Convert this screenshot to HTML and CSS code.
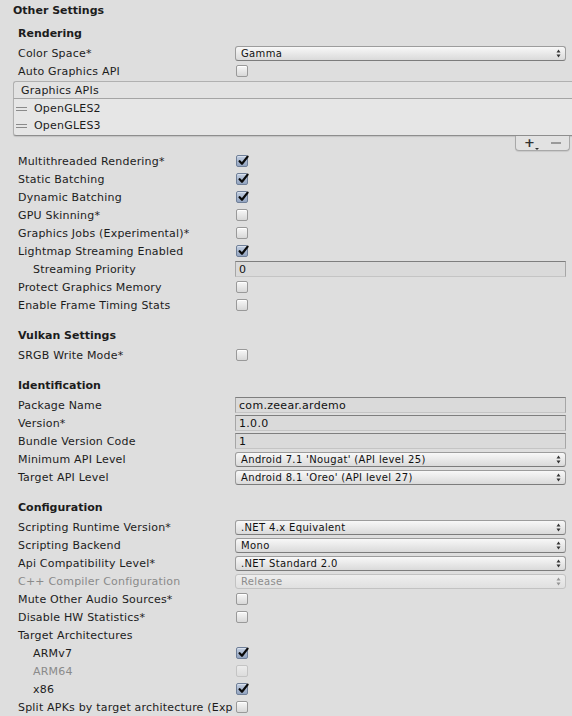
FILE: index.html
```html
<!DOCTYPE html>
<html>
<head>
<meta charset="utf-8">
<link rel="stylesheet" href="styles.css">
</head>
<body>
<svg width="0" height="0" class="defs">
  <defs>
    <symbol id="chk" viewBox="0 0 12 12">
      <path d="M2.6 6.2 L5 8.8 L10.6 1.6" fill="none" stroke="#0a0a0a" stroke-width="2.2" stroke-linecap="round" stroke-linejoin="round"/>
    </symbol>
    <symbol id="arr" viewBox="0 0 5 9">
      <path d="M2.5 0.5 L4.5 3.5 L0.5 3.5 Z M2.5 8.5 L4.5 5.5 L0.5 5.5 Z" fill="#333"/>
    </symbol>
  </defs>
</svg>
<div class="panel">
  <div class="title">Other Settings</div>

  <div class="section first">
    <div class="heading">Rendering</div>
    <div class="row"><div class="label">Color Space*</div><div class="control"><div class="popup"><span>Gamma</span><svg class="arrows"><use href="#arr"/></svg></div></div></div>
    <div class="row"><div class="label">Auto Graphics API</div><div class="control"><span class="cb"></span></div></div>
    <div class="list">
      <div class="list-head">Graphics APIs</div>
      <div class="list-body">
        <div class="list-item"><span class="handle"></span>OpenGLES2</div>
        <div class="list-item"><span class="handle"></span>OpenGLES3</div>
      </div>
      <div class="list-foot-wrap">
        <div class="list-foot">
          <span class="plus">+<span class="tri"></span></span>
          <span class="minus"></span>
        </div>
      </div>
    </div>
    <div class="row"><div class="label">Multithreaded Rendering*</div><div class="control"><span class="cb on"><svg><use href="#chk"/></svg></span></div></div>
    <div class="row"><div class="label">Static Batching</div><div class="control"><span class="cb on"><svg><use href="#chk"/></svg></span></div></div>
    <div class="row"><div class="label">Dynamic Batching</div><div class="control"><span class="cb on"><svg><use href="#chk"/></svg></span></div></div>
    <div class="row"><div class="label">GPU Skinning*</div><div class="control"><span class="cb"></span></div></div>
    <div class="row"><div class="label">Graphics Jobs (Experimental)*</div><div class="control"><span class="cb"></span></div></div>
    <div class="row"><div class="label">Lightmap Streaming Enabled</div><div class="control"><span class="cb on"><svg><use href="#chk"/></svg></span></div></div>
    <div class="row"><div class="label indent">Streaming Priority</div><div class="control"><div class="field">0</div></div></div>
    <div class="row"><div class="label">Protect Graphics Memory</div><div class="control"><span class="cb"></span></div></div>
    <div class="row"><div class="label">Enable Frame Timing Stats</div><div class="control"><span class="cb"></span></div></div>
  </div>

  <div class="section">
    <div class="heading">Vulkan Settings</div>
    <div class="row"><div class="label">SRGB Write Mode*</div><div class="control"><span class="cb"></span></div></div>
  </div>

  <div class="section">
    <div class="heading">Identification</div>
    <div class="row"><div class="label">Package Name</div><div class="control"><div class="field">com.zeear.ardemo</div></div></div>
    <div class="row"><div class="label">Version*</div><div class="control"><div class="field">1.0.0</div></div></div>
    <div class="row"><div class="label">Bundle Version Code</div><div class="control"><div class="field">1</div></div></div>
    <div class="row"><div class="label">Minimum API Level</div><div class="control"><div class="popup"><span>Android 7.1 'Nougat' (API level 25)</span><svg class="arrows"><use href="#arr"/></svg></div></div></div>
    <div class="row"><div class="label">Target API Level</div><div class="control"><div class="popup"><span>Android 8.1 'Oreo' (API level 27)</span><svg class="arrows"><use href="#arr"/></svg></div></div></div>
  </div>

  <div class="section">
    <div class="heading">Configuration</div>
    <div class="row"><div class="label">Scripting Runtime Version*</div><div class="control"><div class="popup"><span>.NET 4.x Equivalent</span><svg class="arrows"><use href="#arr"/></svg></div></div></div>
    <div class="row"><div class="label">Scripting Backend</div><div class="control"><div class="popup"><span>Mono</span><svg class="arrows"><use href="#arr"/></svg></div></div></div>
    <div class="row"><div class="label">Api Compatibility Level*</div><div class="control"><div class="popup"><span>.NET Standard 2.0</span><svg class="arrows"><use href="#arr"/></svg></div></div></div>
    <div class="row"><div class="label disabled">C++ Compiler Configuration</div><div class="control"><div class="popup disabled"><span>Release</span><svg class="arrows"><use href="#arr"/></svg></div></div></div>
    <div class="row"><div class="label">Mute Other Audio Sources*</div><div class="control"><span class="cb"></span></div></div>
    <div class="row"><div class="label">Disable HW Statistics*</div><div class="control"><span class="cb"></span></div></div>
    <div class="row"><div class="label">Target Architectures</div><div class="control"></div></div>
    <div class="row"><div class="label indent">ARMv7</div><div class="control"><span class="cb on"><svg><use href="#chk"/></svg></span></div></div>
    <div class="row"><div class="label indent disabled">ARM64</div><div class="control"><span class="cb disabled"></span></div></div>
    <div class="row"><div class="label indent">x86</div><div class="control"><span class="cb on"><svg><use href="#chk"/></svg></span></div></div>
    <div class="row"><div class="label">Split APKs by target architecture (Exp</div><div class="control"><span class="cb"></span></div></div>
  </div>
</div>
</body>
</html>
```

FILE: styles.css
```css
html, body {
  margin: 0;
  padding: 0;
  background: #dedede;
  font-family: "DejaVu Sans", Verdana, sans-serif;
  font-size: 11px;
  color: #1c1c1c;
  overflow: hidden;
}

.defs {
  position: absolute;
  width: 0;
  height: 0;
}

.panel {
  padding-top: 1px;
}

.title {
  height: 18px;
  line-height: 19px;
  padding-left: 13px;
  font-weight: bold;
  font-size: 11px;
}

.section {
  margin-top: 12px;
}

.section.first {
  margin-top: 5px;
}

.heading {
  height: 18px;
  line-height: 19px;
  padding-left: 18px;
  font-weight: bold;
  font-size: 11px;
  margin-bottom: 2px;
}

.row {
  display: flex;
  align-items: center;
  height: 18px;
}

.label {
  width: 235px;
  flex: none;
  box-sizing: border-box;
  padding-left: 18px;
  white-space: nowrap;
  overflow: hidden;
  letter-spacing: 0.2px;
}

.label.indent {
  padding-left: 33px;
}

.label.disabled {
  color: #8a8a8a;
}

.control {
  flex: 1;
  margin-right: 6px;
  display: flex;
  align-items: center;
  height: 18px;
}

/* checkbox */
.cb {
  position: relative;
  width: 12px;
  height: 12px;
  margin-left: 1px;
  box-sizing: border-box;
  border: 1px solid #999;
  border-radius: 2px;
  background: linear-gradient(#f7f7f7, #d8d8d8);
  box-shadow: inset 0 1px 0 #fff;
}

.cb.on {
  border-color: #6f7f98;
  background: linear-gradient(#c2cee0, #93a4c0);
  box-shadow: inset 0 1px 0 #d8e0ec;
}

.cb.disabled {
  border-color: #c4c4c4;
  background: linear-gradient(#ececec, #dcdcdc);
  box-shadow: none;
}

.cb svg {
  position: absolute;
  left: 0;
  top: -1px;
  width: 12px;
  height: 12px;
  overflow: visible;
}

/* popup */
.popup {
  flex: 1;
  height: 15px;
  box-sizing: border-box;
  border: 1px solid #9c9c9c;
  border-bottom-color: #7c7c7c;
  border-radius: 3px;
  background: linear-gradient(#f8f8f8, #dadada);
  display: flex;
  align-items: center;
  justify-content: space-between;
  padding: 0 4px 0 5px;
  font-size: 10px;
  letter-spacing: 0.35px;
  color: #111;
}

.popup.disabled {
  border-color: #c2c2c2;
  background: linear-gradient(#eeeeee, #e0e0e0);
  color: #8c8c8c;
}

.popup.disabled .arrows {
  opacity: 0.45;
}

.arrows {
  width: 5px;
  height: 9px;
}

/* text field */
.field {
  flex: 1;
  height: 16px;
  box-sizing: border-box;
  border: 1px solid #a6a6a6;
  border-top-color: #7e7e7e;
  border-bottom-color: #c4c4c4;
  background: #dadada;
  padding-left: 3px;
  line-height: 15px;
  letter-spacing: 0.3px;
  color: #111;
}

/* reorderable list */
.list {
  margin: 1px 0 1px 13px;
}

.list-head {
  height: 18px;
  box-sizing: border-box;
  border: 1px solid #b0b0b0;
  border-right: none;
  border-bottom-color: #a4a4a4;
  border-radius: 3px 0 0 0;
  background: #e2e2e2;
  line-height: 17px;
  padding-left: 7px;
  letter-spacing: 0.2px;
}

.list-body {
  box-sizing: border-box;
  height: 37px;
  padding-top: 1px;
  border-left: 1px solid #b0b0b0;
  border-bottom: 1px solid #8e8e8e;
  border-radius: 0 0 0 3px;
  background: #e6e6e6;
  box-shadow: 0 1px 1px rgba(0, 0, 0, 0.12);
  letter-spacing: 0.2px;
}

.list-item {
  height: 17px;
  display: flex;
  align-items: center;
}

.handle {
  width: 11px;
  height: 4px;
  margin: 1px 7px 0 2px;
  box-sizing: border-box;
  border-top: 1px solid #8a8a8a;
  border-bottom: 1px solid #8a8a8a;
}

.list-foot-wrap {
  display: flex;
  justify-content: flex-end;
}

.list-foot {
  width: 55px;
  height: 15px;
  margin-right: 2px;
  box-sizing: border-box;
  border: 1px solid #a8a8a8;
  border-top: none;
  border-radius: 0 0 4px 4px;
  background: #e2e2e2;
  display: flex;
  align-items: center;
  justify-content: space-around;
  box-shadow: 0 1px 1px rgba(0, 0, 0, 0.1);
}

.plus {
  position: relative;
  font-weight: bold;
  font-size: 13px;
  line-height: 12px;
  color: #333;
}

.tri {
  position: absolute;
  right: -4px;
  bottom: -1px;
  width: 0;
  height: 0;
  border-left: 2px solid transparent;
  border-right: 2px solid transparent;
  border-top: 2px solid #333;
}

.minus {
  width: 10px;
  height: 2px;
  background: #9a9a9a;
}
```
